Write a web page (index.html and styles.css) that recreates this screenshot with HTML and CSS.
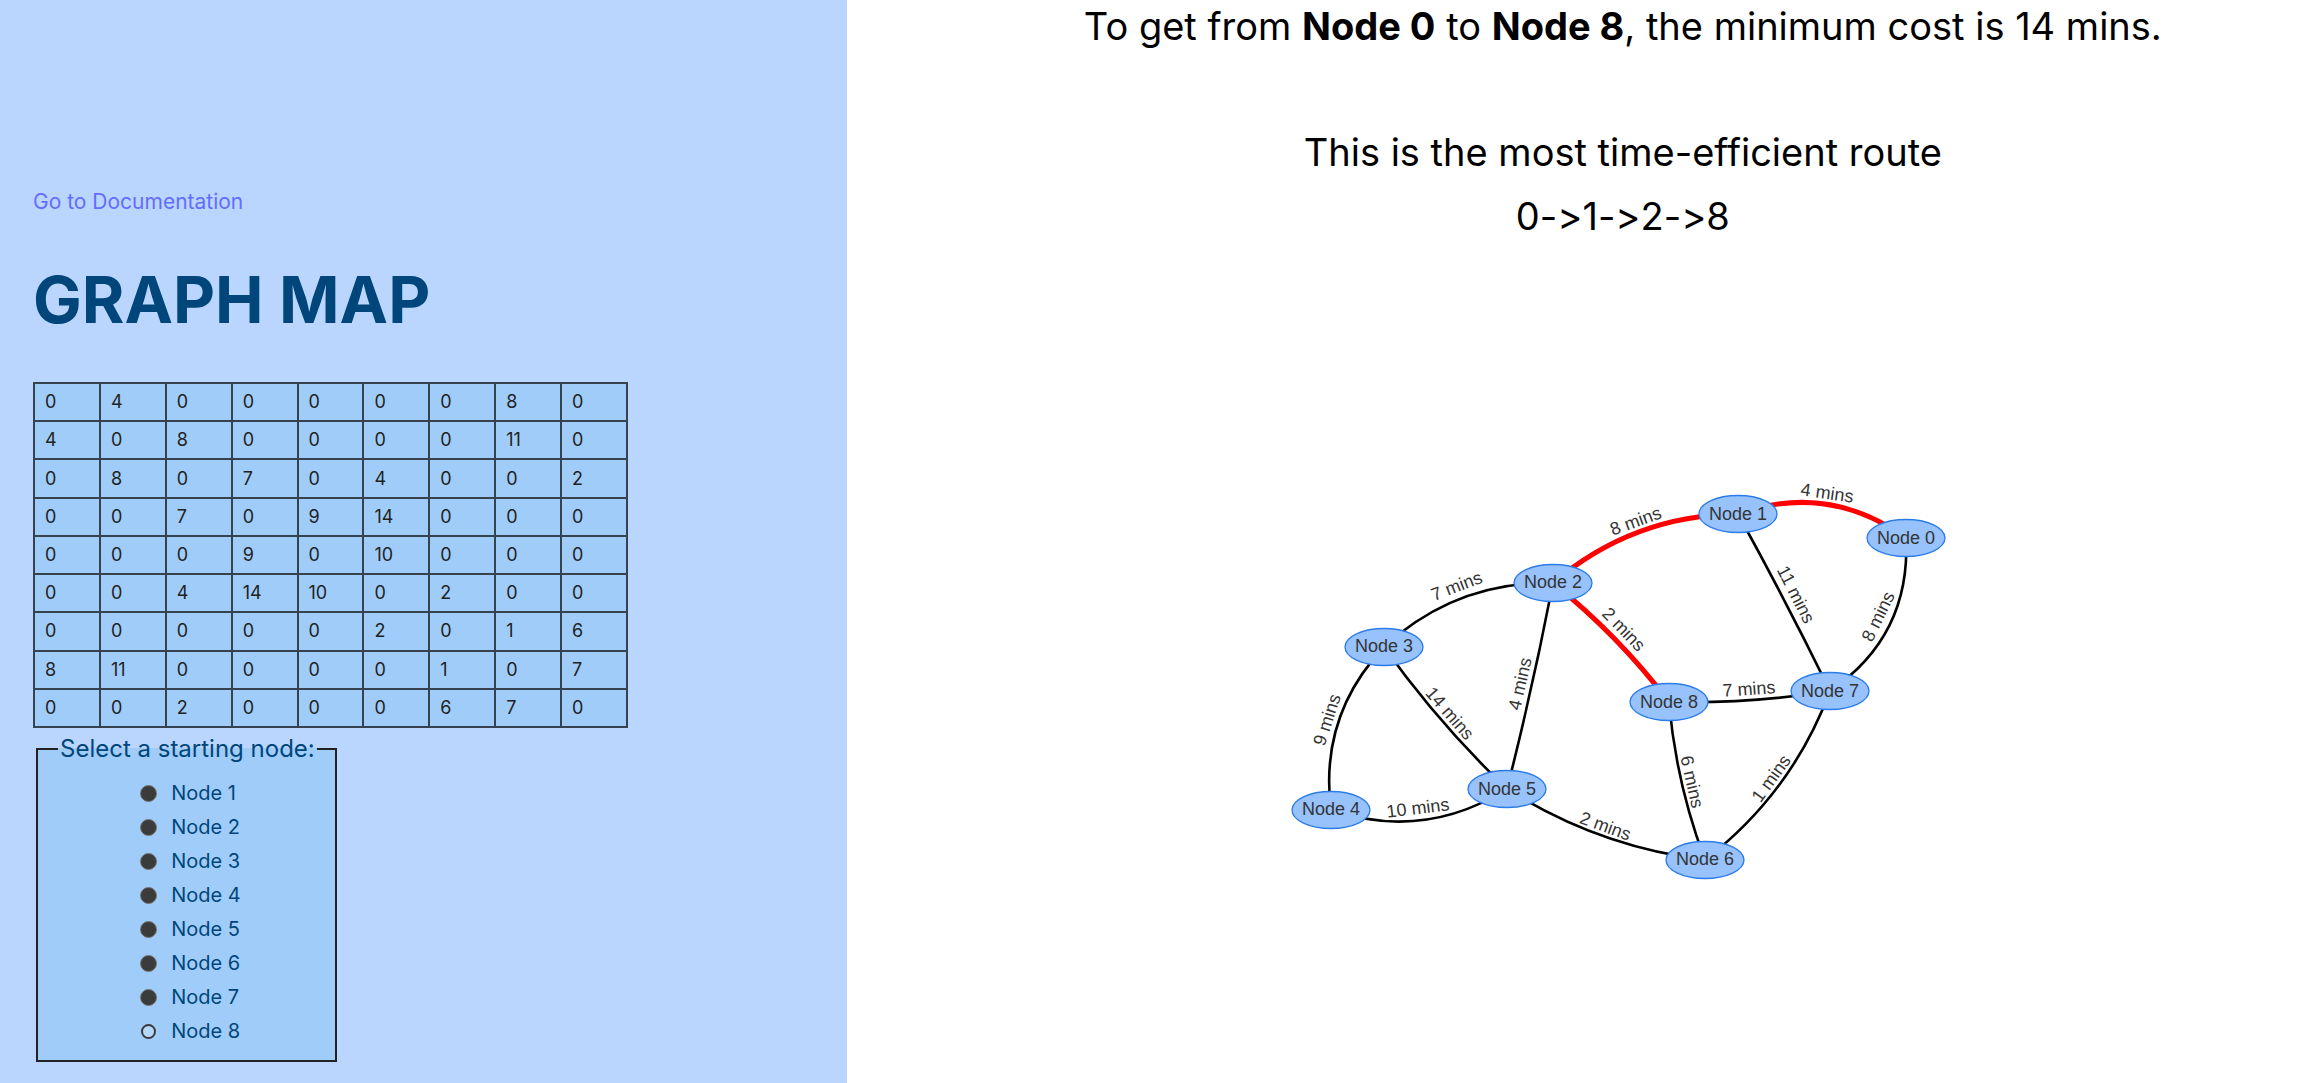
FILE: index.html
```html
<!DOCTYPE html>
<html lang="en">
<head>
<meta charset="utf-8">
<meta name="viewport" content="width=device-width, initial-scale=1">
<title>Graph Map</title>
<link rel="stylesheet" href="styles.css">
</head>
<body>
<div class="layout">
  <aside class="sidebar">
    <a class="docs-link" href="#documentation">Go to Documentation</a>
    <h1 class="title">GRAPH MAP</h1>
    <table class="matrix">
      <tbody>
        <tr><td>0</td><td>4</td><td>0</td><td>0</td><td>0</td><td>0</td><td>0</td><td>8</td><td>0</td></tr>
        <tr><td>4</td><td>0</td><td>8</td><td>0</td><td>0</td><td>0</td><td>0</td><td>11</td><td>0</td></tr>
        <tr><td>0</td><td>8</td><td>0</td><td>7</td><td>0</td><td>4</td><td>0</td><td>0</td><td>2</td></tr>
        <tr><td>0</td><td>0</td><td>7</td><td>0</td><td>9</td><td>14</td><td>0</td><td>0</td><td>0</td></tr>
        <tr><td>0</td><td>0</td><td>0</td><td>9</td><td>0</td><td>10</td><td>0</td><td>0</td><td>0</td></tr>
        <tr><td>0</td><td>0</td><td>4</td><td>14</td><td>10</td><td>0</td><td>2</td><td>0</td><td>0</td></tr>
        <tr><td>0</td><td>0</td><td>0</td><td>0</td><td>0</td><td>2</td><td>0</td><td>1</td><td>6</td></tr>
        <tr><td>8</td><td>11</td><td>0</td><td>0</td><td>0</td><td>0</td><td>1</td><td>0</td><td>7</td></tr>
        <tr><td>0</td><td>0</td><td>2</td><td>0</td><td>0</td><td>0</td><td>6</td><td>7</td><td>0</td></tr>
      </tbody>
    </table>
    <fieldset class="picker">
      <legend>Select a starting node:</legend>
      <div class="options">
        <label class="option"><input type="radio" name="node" value="1"><span>Node 1</span></label>
        <label class="option"><input type="radio" name="node" value="2"><span>Node 2</span></label>
        <label class="option"><input type="radio" name="node" value="3"><span>Node 3</span></label>
        <label class="option"><input type="radio" name="node" value="4"><span>Node 4</span></label>
        <label class="option"><input type="radio" name="node" value="5"><span>Node 5</span></label>
        <label class="option"><input type="radio" name="node" value="6"><span>Node 6</span></label>
        <label class="option"><input type="radio" name="node" value="7"><span>Node 7</span></label>
        <label class="option"><input type="radio" name="node" value="8" checked><span>Node 8</span></label>
      </div>
    </fieldset>
  </aside>
  <main class="result">
    <p class="cost">To get from <strong>Node 0</strong> to <strong>Node 8</strong>, the minimum cost is 14 mins.</p>
    <p class="route">This is the most time-efficient route<br>0-&gt;1-&gt;2-&gt;8</p>
    <svg class="graph" viewBox="1283 470 680 430" role="img" aria-label="Graph of nodes and travel times">
      <g class="edges">
        <path d="M1906 538Q1911 636 1830 691"/>
        <path d="M1738 514Q1786 601 1830 691"/>
        <path d="M1553 583Q1456 581 1384 647"/>
        <path d="M1384 647Q1319 716 1331 810"/>
        <path d="M1384 647Q1439 724 1507 789"/>
        <path d="M1553 583Q1533 687 1507 789"/>
        <path d="M1331 810Q1424 841 1507 789"/>
        <path d="M1507 789Q1598 847 1705 860"/>
        <path d="M1669 702Q1750 704 1830 691"/>
        <path d="M1669 702Q1676 783 1705 860"/>
        <path d="M1830 691Q1792 793 1705 860"/>
        <path class="active" d="M1738 514Q1828 482 1906 538"/>
        <path class="active" d="M1738 514Q1633 515 1553 583"/>
        <path class="active" d="M1553 583Q1618 635 1669 702"/>
      </g>
      <g class="nodes">
        <ellipse cx="1906" cy="538" rx="39" ry="18.5"/>
        <ellipse cx="1738" cy="514" rx="39" ry="18.5"/>
        <ellipse cx="1553" cy="583" rx="39" ry="18.5"/>
        <ellipse cx="1384" cy="647" rx="39" ry="18.5"/>
        <ellipse cx="1331" cy="810" rx="39" ry="18.5"/>
        <ellipse cx="1507" cy="789" rx="39" ry="18.5"/>
        <ellipse cx="1705" cy="860" rx="39" ry="18.5"/>
        <ellipse cx="1830" cy="691" rx="39" ry="18.5"/>
        <ellipse cx="1669" cy="702" rx="39" ry="18.5"/>
      </g>
      <g class="labels">
        <text x="1906" y="544">Node 0</text>
        <text x="1738" y="520">Node 1</text>
        <text x="1553" y="588">Node 2</text>
        <text x="1384" y="652">Node 3</text>
        <text x="1331" y="815">Node 4</text>
        <text x="1507" y="795">Node 5</text>
        <text x="1705" y="865">Node 6</text>
        <text x="1830" y="697">Node 7</text>
        <text x="1669" y="708">Node 8</text>
        <text transform="translate(1827 494) rotate(8)" y="5">4 mins</text>
        <text transform="translate(1636 522) rotate(-20)" y="5">8 mins</text>
        <text transform="translate(1795 595) rotate(63)" y="5">11 mins</text>
        <text transform="translate(1879 617) rotate(-64)" y="5">8 mins</text>
        <text transform="translate(1623 630) rotate(46)" y="5">2 mins</text>
        <text transform="translate(1457 587) rotate(-21)" y="5">7 mins</text>
        <text transform="translate(1328 720) rotate(-72)" y="5">9 mins</text>
        <text transform="translate(1449 714) rotate(49)" y="5">14 mins</text>
        <text transform="translate(1521 684) rotate(-77)" y="5">4 mins</text>
        <text transform="translate(1418 809) rotate(-7)" y="5">10 mins</text>
        <text transform="translate(1605 827) rotate(20)" y="5">2 mins</text>
        <text transform="translate(1749 690) rotate(-4)" y="5">7 mins</text>
        <text transform="translate(1691 782) rotate(77)" y="5">6 mins</text>
        <text transform="translate(1772 779) rotate(-54)" y="5">1 mins</text>
      </g>
    </svg>
  </main>
</div>
</body>
</html>
```
FILE: styles.css
```css
* {
  box-sizing: border-box;
}

body {
  margin: 0;
  font-family: Inter, "Liberation Sans", sans-serif;
  font-feature-settings: "calt" 0;
  background: #fff;
  color: #000;
}

.layout {
  display: grid;
  grid-template-columns: 36.7% 1fr;
  min-height: 100vh;
}

.sidebar {
  display: flex;
  flex-direction: column;
  align-items: flex-start;
  padding: 186px 33px 20px;
  background: #bad6ff;
  color: #00467a;
}

.docs-link {
  font-size: 21px;
  font-weight: 400;
  line-height: 32px;
  color: #646cff;
  text-decoration: none;
}

.title {
  margin: 44px 0;
  font-size: 65px;
  font-weight: 700;
  line-height: 76px;
}

.matrix {
  width: 595px;
  max-width: 100%;
  height: 346px;
  table-layout: fixed;
  border-collapse: collapse;
  background: #a0ccfa;
  color: #222;
  font-size: 18px;
  line-height: 22px;
}

.matrix td {
  padding: 0 10px;
  border: 2px solid #36424d;
}

.picker {
  width: 301px;
  margin: 6px 3px 0;
  padding: 12px 0;
  border: 2px solid #222;
  background: #a0ccfa;
}

.picker legend {
  margin-left: 20px;
  padding: 0 2px;
  font-size: 24px;
  line-height: 30px;
}

.options {
  display: flex;
  flex-direction: column;
  width: fit-content;
  margin: 0 auto;
  padding-left: 8px;
}

.option {
  display: flex;
  align-items: center;
  gap: 14px;
  font-size: 20px;
  line-height: 34px;
}

.option input {
  appearance: none;
  width: 17px;
  height: 17px;
  margin: 0;
  border: 1px solid #77736f;
  border-radius: 50%;
  background: #3b3b3b;
}

.option input:checked {
  width: 15px;
  height: 15px;
  margin: 0 1px;
  border: 2px solid #3b3b3b;
  background: #b4d8fc;
}

.result {
  display: flex;
  flex-direction: column;
  align-items: center;
  padding-left: 92px;
  text-align: center;
  font-size: 38px;
  line-height: 64px;
}

.result p {
  margin: 0;
}

.result .cost {
  margin-top: -6px;
}

.result .route {
  margin: 62px 0 222px;
}

.graph {
  width: 100%;
  max-width: 680px;
}

.edges path {
  fill: none;
  stroke: #000;
  stroke-width: 2.6;
}

.edges .active {
  stroke: #f00;
  stroke-width: 5;
}

.nodes ellipse {
  fill: #97c2fc;
  stroke: #2b7ce9;
  stroke-width: 1.3;
}

.labels text {
  font-family: "Liberation Sans", Arial, sans-serif;
  font-size: 18px;
  fill: #343434;
  text-anchor: middle;
}
```
